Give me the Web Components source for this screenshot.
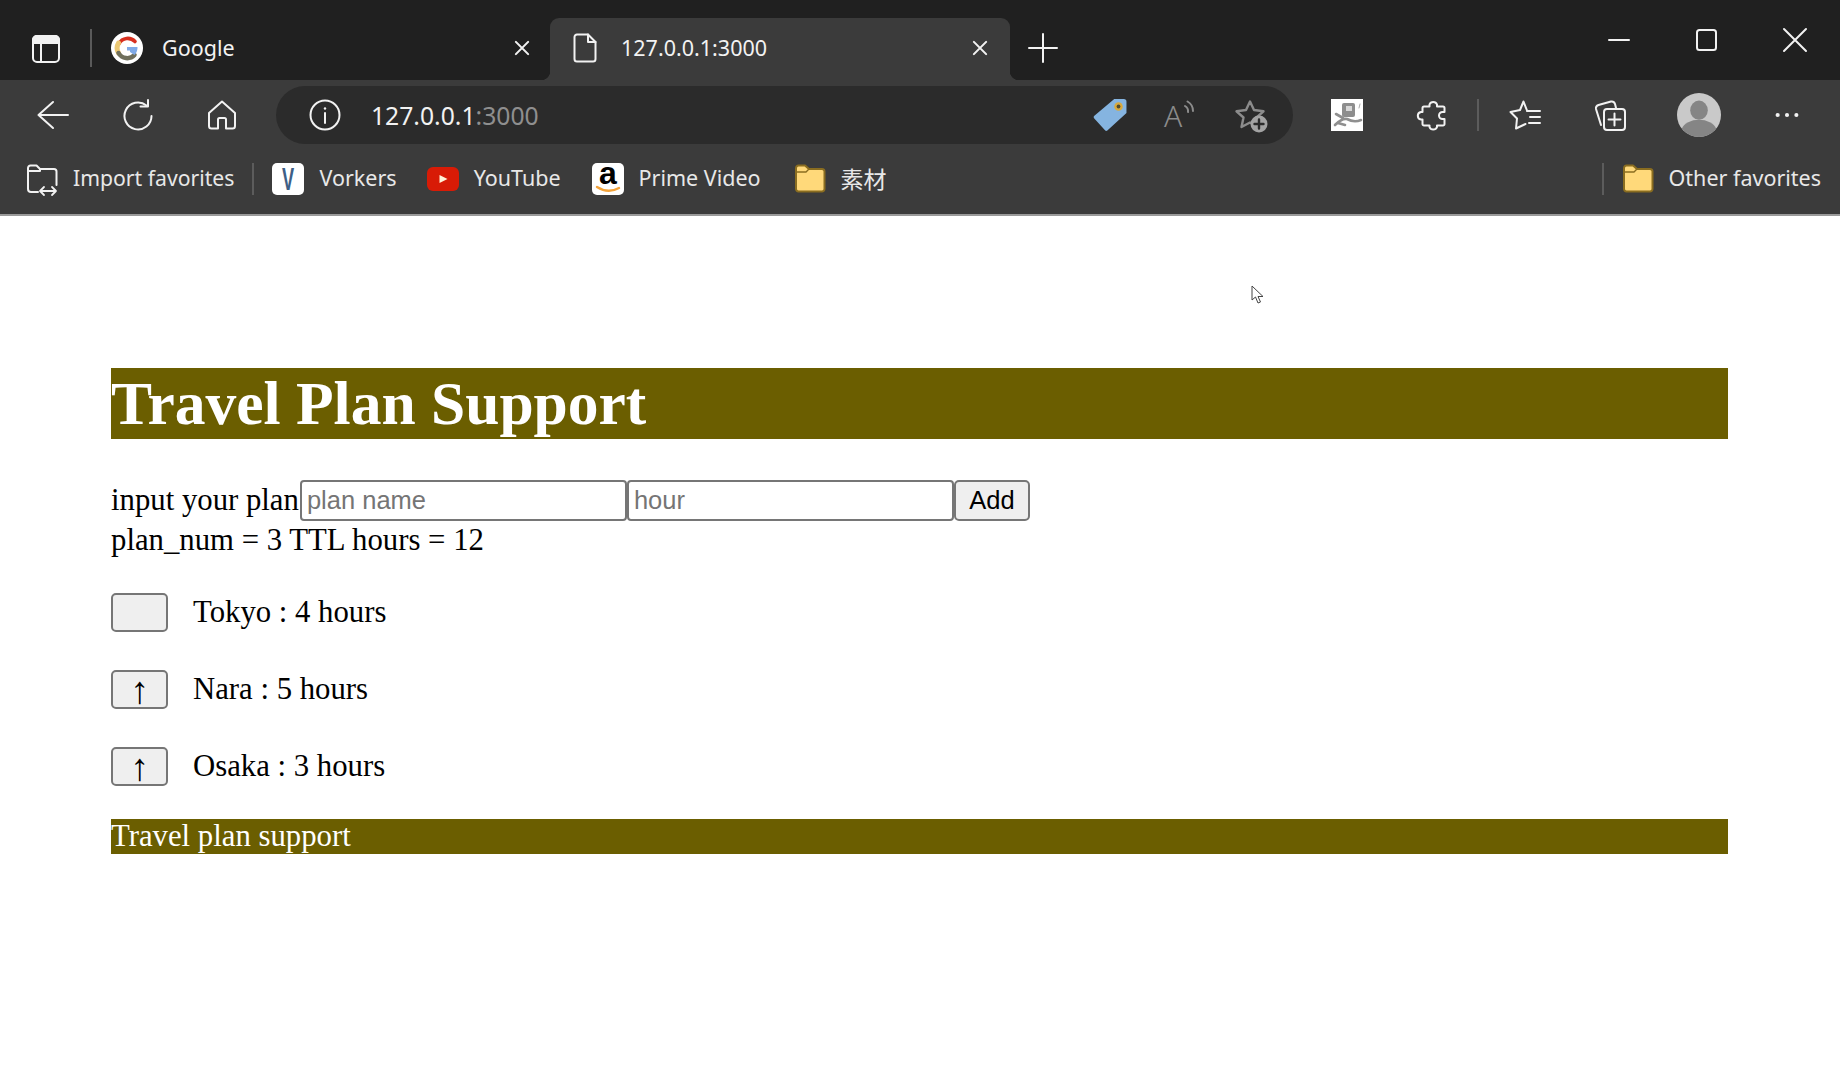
<!DOCTYPE html>
<html lang="en">
<head>
<meta charset="utf-8">
<title>Travel Plan Support</title>
<style>
	html, body { margin: 0; padding: 0; background: #fff; }
	body { width: 1840px; height: 1080px; overflow: hidden; font-family: "Liberation Serif", serif; }
</style>
</head>
<body>
<browser-window>
	<plan-app></plan-app>
</browser-window>

<script>
const ICONS = {
	sidebar: `<rect x="3" y="4" width="26" height="26" rx="4"/><path d="M3 11V8A4 4 0 0 1 7 4H25A4 4 0 0 1 29 8V11Z" fill="currentColor"/><path d="M11 11V30"/>`,
	google: `<circle cx="16" cy="16" r="16" fill="#fff" stroke="none"/><path d="M8 11.5A10 10 0 0 1 24 9.5" fill="none" stroke="#d8301f" stroke-width="3.6"/><path d="M7.5 11A10 10 0 0 0 7.5 21" fill="none" stroke="#ecc873" stroke-width="5"/><path d="M7.5 21A10 10 0 0 0 23.5 23" fill="none" stroke="#6f6f5c" stroke-width="4.5"/><path d="M16 15H26.5A10.5 10.5 0 0 1 23.5 23L19 20V18.5H16Z" fill="#7fa9e6" stroke="none"/>`,
	doc: `<path d="M8 2.5H19L26.5 10V27A2.5 2.5 0 0 1 24 29.5H8A2.5 2.5 0 0 1 5.5 27V5A2.5 2.5 0 0 1 8 2.5Z"/><path d="M19 2.5V10H26.5"/>`,
	close: `<path d="M9 9L23 23M23 9L9 23" stroke-width="2.4"/>`,
	plus: `<path d="M16 2V30M2 16H30"/>`,
	minimize: `<path d="M6 16H26"/>`,
	maximize: `<rect x="6" y="6" width="19" height="20" rx="2.5"/>`,
	winclose: `<path d="M5 5L27 27M27 5L5 27"/>`,
	back: `<path d="M1.5 16H31M16 3L1.5 16L16 29"/>`,
	refresh: `<path d="M24.5 6.5A13.5 13.5 0 1 0 29.5 17"/><path d="M18.5 7.5H26V1"/>`,
	home: `<path d="M16 2.5L3 14V27A2.5 2.5 0 0 0 5.5 29.5H12V20.5A1.5 1.5 0 0 1 13.5 19H18.5A1.5 1.5 0 0 1 20 20.5V29.5H26.5A2.5 2.5 0 0 0 29 27V14Z"/>`,
	info: `<circle cx="16" cy="16" r="14.5"/><path d="M16 14V24"/><circle cx="16" cy="9.5" r="1.2" fill="currentColor" stroke="none"/>`,
	tag: `<path d="M20 1H29A2.5 2.5 0 0 1 31.5 3.5V14L13.5 30.5A1.5 1.5 0 0 1 11.5 30.5L1 19A1.5 1.5 0 0 1 1 17Z" fill="#85b4e0" stroke="none"/><circle cx="24" cy="8" r="4" fill="#d8a93c" stroke="none"/><circle cx="24" cy="8" r="1.8" fill="#4f4a2c" stroke="none"/>`,
	read: `<text x="-1" y="28" font-family="Noto Sans, sans-serif" font-size="30" font-weight="300" fill="#8c8c8c" stroke="none">A</text><path d="M20 7A6 6 0 0 1 23 13M22.5 2.5A11 11 0 0 1 28 12" stroke="#8c8c8c"/>`,
	favadd: `<path d="M15 2.5L19 11L28.5 12.3L21.5 18.5L23.5 28L15 23.5L6.5 28L8.5 18.5L1.5 12.3L11 11Z" stroke="#8c8c8c" stroke-width="2.4"/><circle cx="24" cy="25" r="8.5" fill="#a3a3a3" stroke="none"/><path d="M24 20.5V29.5M19.5 25H28.5" stroke="#2b2b2b" stroke-width="2.4"/>`,
	mascot: `<rect width="32" height="32" fill="#fff" stroke="none"/><rect x="11" y="4" width="13" height="14" rx="2" fill="#8d8d8d" stroke="none"/><rect x="15" y="7" width="6" height="5" fill="#d8d8d8" stroke="none"/><path d="M4 26Q11 19 16 20Q23 24 30 21M5 15L12 19M7 24L14 26" fill="none" stroke="#8f8f8f" stroke-width="2.6"/><path d="M29 5L28 9" stroke="#aaa" stroke-width="1"/>`,
	puzzle: `<path d="M12.5 5.5A4 4 0 0 1 20 5.5V7.5H26A1.5 1.5 0 0 1 27.5 9V13H25.5A3.4 3.4 0 0 0 25.5 20H27.5V25A1.5 1.5 0 0 1 26 26.5H20V28A4 4 0 0 1 12.5 28V26.5H7A1.5 1.5 0 0 1 5.5 25V20.5H4A3.8 3.8 0 0 1 4 13H5.5V9A1.5 1.5 0 0 1 7 7.5H12.5Z"/>`,
	favlist: `<path d="M18 11.5L14.5 2.5L11 11L1.5 13L8 19.5L7 29.5L16.5 25"/><path d="M18 12H31M21 18H31M20 24H31"/>`,
	collections: `<path d="M7 26L2 10Q1.5 7 4.5 6L17 2.5Q20 2 21 5L22 9"/><rect x="10" y="10" width="21" height="21" rx="3"/><path d="M20.5 14.5V26.5M14.5 20.5H26.5"/>`,
	avatar: `<circle cx="16" cy="16" r="16" fill="#c9c9c9" stroke="none"/><ellipse cx="16" cy="12.5" rx="6.4" ry="7" fill="#858585" stroke="none"/><path d="M3.5 26A13 9 0 0 1 28.5 26A16 16 0 0 1 3.5 26Z" fill="#858585" stroke="none"/>`,
	more: `<circle cx="6" cy="16" r="2.2" fill="currentColor" stroke="none"/><circle cx="16" cy="16" r="2.2" fill="currentColor" stroke="none"/><circle cx="26" cy="16" r="2.2" fill="currentColor" stroke="none"/>`,
	importfav: `<path d="M12 29H5A3 3 0 0 1 2 26V5A2.5 2.5 0 0 1 4.5 2.5H10.5L14 6H28A2.5 2.5 0 0 1 30.5 8.5V22"/><path d="M2 8H14L14 6"/><path d="M14 28H30M18 24L14 28L18 32M26 24L30 28L26 32" stroke-width="1.8"/>`,
	vorkers: `<rect width="32" height="32" rx="5" fill="#fff" stroke="none"/><text transform="translate(16 27) scale(.7 1.2)" text-anchor="middle" font-family="Liberation Sans, sans-serif" font-size="26" font-weight="700" fill="#3d5f86" stroke="none">V</text>`,
	youtube: `<rect y="4" width="32" height="24" rx="6" fill="#d81b06" stroke="none"/><path d="M12.5 12L20.5 16L12.5 20Z" fill="#fff3d8" stroke="none"/>`,
	amazon: `<rect width="32" height="32" rx="5" fill="#fff" stroke="none"/><text x="16" y="21" text-anchor="middle" font-family="Liberation Sans, sans-serif" font-size="32" font-weight="700" fill="#000" stroke="none">a</text><path d="M5 24Q16 31 27 25" fill="none" stroke="#f3a33a" stroke-width="2.4"/>`,
	folder: `<path d="M2 5A2.5 2.5 0 0 1 4.5 2.5H11L15 6H28A2.5 2.5 0 0 1 30.5 8.5V26A2.5 2.5 0 0 1 28 28.5H4.5A2.5 2.5 0 0 1 2 26Z" fill="#ffd97a" stroke="#8a6d20" stroke-width="2"/><path d="M2 9H12L15 6" fill="none" stroke="#8a6d20" stroke-width="1.4"/>`,
};

class AppIcon extends HTMLElement {
	connectedCallback() {
		const size = this.getAttribute("size") || 32;
		const name = this.getAttribute("name");
		this.attachShadow({ mode: "open" });
		this.shadowRoot.innerHTML = `
			<style>
				:host { display: inline-flex; flex: none; width: ${size}px; height: ${size}px; color: #f2f2f2; }
				svg { display: block; width: 100%; height: 100%; overflow: visible; fill: none; stroke: currentColor; stroke-width: 2; stroke-linecap: round; stroke-linejoin: round; }
			</style>
			<svg viewBox="0 0 32 32">${ICONS[name]}</svg>
		`;
	}
}

class BrowserTab extends HTMLElement {
	constructor() {
		super();
		this.attachShadow({ mode: "open" });
		this.shadowRoot.innerHTML = `
			<style>
				:host { display: flex; align-items: center; position: relative; box-sizing: border-box; height: 62px; color: #f2f2f2; font-size: 21.5px; }
				:host([active]) { background: #3b3b3b; border-radius: 9px 9px 0 0; }
				:host([active])::before, :host([active])::after { content: ""; position: absolute; bottom: 0; width: 9px; height: 9px; }
				:host([active])::before { left: -9px; background: radial-gradient(circle at 0 0, transparent 9px, #3b3b3b 9.5px); }
				:host([active])::after { right: -9px; background: radial-gradient(circle at 100% 0, transparent 9px, #3b3b3b 9.5px); }
				.label { flex: 1; white-space: nowrap; }
			</style>
			<slot name="icon"></slot>
			<span class="label"><slot></slot></span>
			<app-icon name="close" size="28"></app-icon>
		`;
	}
}

class TabStrip extends HTMLElement {
	constructor() {
		super();
		this.attachShadow({ mode: "open" });
		this.shadowRoot.innerHTML = `
			<style>
				:host { display: flex; align-items: flex-end; box-sizing: border-box; height: 80px; background: #202020; }
				.lead { display: flex; align-items: center; box-sizing: border-box; height: 62px; padding: 0 0 3px 30px; }
				.divider { width: 2px; height: 38px; margin-left: 28px; background: #5a5a5a; }
				.plain { margin-left: 19px; width: 439px; gap: 19px; padding: 0 14px 3px 0; }
				.current { width: 460px; padding: 0 16px 3px 19px; gap: 20px; }
				.new { display: flex; align-items: center; box-sizing: border-box; height: 62px; padding-bottom: 3px; margin-left: 17px; }
				.win { margin-left: auto; display: flex; align-self: flex-start; gap: 56px; padding: 24px 29px 0 0; }
			</style>
			<div class="lead">
				<app-icon name="sidebar"></app-icon>
				<div class="divider"></div>
			</div>
			<browser-tab class="plain"><app-icon slot="icon" name="google"></app-icon>Google</browser-tab>
			<browser-tab class="current" active><app-icon slot="icon" name="doc"></app-icon>127.0.0.1:3000</browser-tab>
			<div class="new"><app-icon name="plus"></app-icon></div>
			<div class="win">
				<app-icon name="minimize"></app-icon>
				<app-icon name="maximize"></app-icon>
				<app-icon name="winclose"></app-icon>
			</div>
		`;
	}
}

class AddressBar extends HTMLElement {
	constructor() {
		super();
		this.attachShadow({ mode: "open" });
		this.shadowRoot.innerHTML = `
			<style>
				:host { display: flex; align-items: center; box-sizing: border-box; width: 1017px; height: 58px; padding: 0 26px 0 33px; border-radius: 29px; background: #2b2b2b; font-size: 24.7px; color: #f2f2f2; }
				.url { margin-left: 30px; flex: 1; }
				.port { color: #8f8f8f; }
			</style>
			<app-icon name="info"></app-icon>
			<span class="url">127.0.0.1<span class="port">:3000</span></span>
			<app-icon name="tag" size="34"></app-icon>
			<app-icon name="read" style="margin-left:38px"></app-icon>
			<app-icon name="favadd" style="margin-left:38px"></app-icon>
		`;
	}
}

class NavToolbar extends HTMLElement {
	constructor() {
		super();
		this.attachShadow({ mode: "open" });
		this.shadowRoot.innerHTML = `
			<style>
				:host { display: flex; align-items: center; box-sizing: border-box; height: 68px; padding: 2px 0 0 37px; background: #3b3b3b; }
				.sep { width: 2px; height: 32px; background: #5c5c5c; }
			</style>
			<app-icon name="back"></app-icon>
			<app-icon name="refresh" style="margin-left:53px"></app-icon>
			<app-icon name="home" style="margin-left:52px"></app-icon>
			<address-bar style="margin-left:38px"></address-bar>
			<app-icon name="mascot" style="margin-left:38px"></app-icon>
			<app-icon name="puzzle" style="margin-left:54px"></app-icon>
			<div class="sep" style="margin-left:28px"></div>
			<app-icon name="favlist" style="margin-left:30px"></app-icon>
			<app-icon name="collections" style="margin-left:53px"></app-icon>
			<app-icon name="avatar" size="44" style="margin-left:51px"></app-icon>
			<app-icon name="more" size="30" style="margin-left:51px"></app-icon>
		`;
	}
}

class BookmarkItem extends HTMLElement {
	constructor() {
		super();
		this.attachShadow({ mode: "open" });
		this.shadowRoot.innerHTML = `
			<style>
				:host { display: inline-flex; align-items: center; gap: 15px; color: #e8e8e8; font-size: 21.5px; white-space: nowrap; }
				span { padding-bottom: 2px; }
			</style>
			<slot name="icon"></slot>
			<span><slot></slot></span>
		`;
	}
}

class BookmarkBar extends HTMLElement {
	constructor() {
		super();
		this.attachShadow({ mode: "open" });
		this.shadowRoot.innerHTML = `
			<style>
				:host { display: flex; align-items: center; box-sizing: border-box; height: 68px; padding: 0 19px 5px 26px; background: #3b3b3b; border-bottom: 2px solid #9a9a9a; }
				.sep { width: 2px; height: 32px; background: #5c5c5c; }
			</style>
			<bookmark-item style="font-size:21.2px"><app-icon slot="icon" name="importfav"></app-icon>Import favorites</bookmark-item>
			<div class="sep" style="margin-left:18px"></div>
			<bookmark-item style="margin-left:18px"><app-icon slot="icon" name="vorkers"></app-icon>Vorkers</bookmark-item>
			<bookmark-item style="margin-left:30px"><app-icon slot="icon" name="youtube"></app-icon>YouTube</bookmark-item>
			<bookmark-item style="margin-left:31px"><app-icon slot="icon" name="amazon"></app-icon>Prime Video</bookmark-item>
			<bookmark-item style="margin-left:33px"><app-icon slot="icon" name="folder"></app-icon><span style="font-family:'Noto Sans CJK JP',sans-serif;font-size:23px">素材</span></bookmark-item>
			<div class="sep" style="margin-left:auto"></div>
			<bookmark-item style="margin-left:18px"><app-icon slot="icon" name="folder"></app-icon>Other favorites</bookmark-item>
		`;
	}
}

class BrowserWindow extends HTMLElement {
	constructor() {
		super();
		this.attachShadow({ mode: "open" });
		this.shadowRoot.innerHTML = `
			<style>
				:host { display: block; position: relative; width: 1840px; height: 1080px; font-family: "Noto Sans", sans-serif; }
				.page { font-family: "Liberation Serif", serif; }
				.cursor { position: absolute; left: 1251px; top: 285px; width: 13px; height: 20px; }
			</style>
			<tab-strip></tab-strip>
			<nav-toolbar></nav-toolbar>
			<bookmark-bar></bookmark-bar>
			<div class="page"><slot></slot></div>
			<svg class="cursor" viewBox="0 0 13 20"><path d="M1 1V15L4.5 12L7 18L9.5 17L7 11.5H12Z" fill="#fff" stroke="#444" stroke-width="1"/></svg>
		`;
	}
}

class PlanRow extends HTMLElement {
	constructor() {
		super();
		this.attachShadow({ mode: "open" });
		const first = this.hasAttribute("first");
		this.shadowRoot.innerHTML = `
			<style>
				:host { display: flex; align-items: center; height: 39px; gap: 25px; font-size: 30.75px; color: #000; }
				button { box-sizing: border-box; width: 57px; height: 39px; padding: 0; background: #efefef; border: 2px solid #767676; border-radius: 5px; font: 38px/32px "Liberation Serif", serif; color: #000; overflow: hidden; }
			</style>
			<button>${first ? "" : "↑"}</button>
			<span><slot></slot></span>
		`;
	}
}

class PlanApp extends HTMLElement {
	constructor() {
		super();
		this.attachShadow({ mode: "open" });
		this.plans = [
			{ name: "Tokyo", hours: 4 },
			{ name: "Nara", hours: 5 },
			{ name: "Osaka", hours: 3 },
		];
		this.render();
	}

	render() {
		const total = this.plans.reduce((sum, plan) => sum + plan.hours, 0);
		const rows = this.plans
			.map((plan, i) => `<plan-row ${i === 0 ? "first" : ""}>${plan.name} : ${plan.hours} hours</plan-row>`)
			.join("");
		this.shadowRoot.innerHTML = `
			<style>
				:host { display: block; margin: 0 112px 0 111px; padding-top: 152px; font: 30.75px "Liberation Serif", serif; color: #000; }
				h1 { margin: 0 0 41px; height: 71px; background: #6b5e00; color: #fff; font-size: 61.5px; line-height: 71px; font-weight: 700; }
				form { display: flex; align-items: center; height: 41px; margin: 0; }
				input { box-sizing: border-box; width: 327px; height: 41px; padding: 0 5px; border: 2px solid #767676; border-radius: 4px; background: #fff; font: 25.5px "Liberation Sans", sans-serif; outline: none; }
				input:first-of-type { margin-left: 1px; }
				input::placeholder { color: #757575; opacity: 1; }
				.add { box-sizing: border-box; width: 76px; height: 41px; padding: 0; background: #efefef; border: 2px solid #767676; border-radius: 5px; font: 25.5px "Liberation Sans", sans-serif; color: #000; }
				.stats { height: 35px; line-height: 35px; margin: 2px 0 35px; }
				.rows { display: grid; gap: 38px; }
				footer { height: 35px; line-height: 35px; margin-top: 33px; background: #6b5e00; color: #fff; }
			</style>
			<h1>Travel Plan Support</h1>
			<form>
				<span>input your plan</span>
				<input placeholder="plan name">
				<input placeholder="hour">
				<button class="add" type="button">Add</button>
			</form>
			<div class="stats">plan_num = ${this.plans.length} TTL hours = ${total}</div>
			<div class="rows">${rows}</div>
			<footer>Travel plan support</footer>
		`;
	}
}

customElements.define("app-icon", AppIcon);
customElements.define("browser-tab", BrowserTab);
customElements.define("tab-strip", TabStrip);
customElements.define("address-bar", AddressBar);
customElements.define("nav-toolbar", NavToolbar);
customElements.define("bookmark-item", BookmarkItem);
customElements.define("bookmark-bar", BookmarkBar);
customElements.define("browser-window", BrowserWindow);
customElements.define("plan-row", PlanRow);
customElements.define("plan-app", PlanApp);
</script>
</body>
</html>
